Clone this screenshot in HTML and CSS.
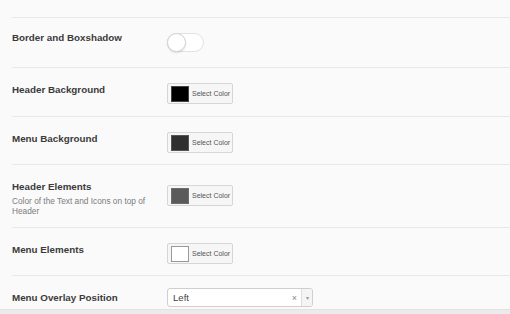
FILE: index.html
```html
<!DOCTYPE html>
<html>
<head>
<meta charset="utf-8">
<link rel="stylesheet" href="styles.css">
</head>
<body>
<div class="panel">
  <div class="spacer"></div>
  <div class="row row-toggle">
    <div class="label"><div class="title title-toggle">Border and Boxshadow</div></div>
    <div class="control">
      <div class="toggle"><span class="knob"></span></div>
    </div>
  </div>
  <div class="row row-tall">
    <div class="label"><div class="title">Header Background</div></div>
    <div class="control">
      <div class="color-btn"><span class="swatch sw-black"></span><span class="btn-text">Select Color</span></div>
    </div>
  </div>
  <div class="row">
    <div class="label"><div class="title">Menu Background</div></div>
    <div class="control">
      <div class="color-btn"><span class="swatch sw-dark"></span><span class="btn-text">Select Color</span></div>
    </div>
  </div>
  <div class="row">
    <div class="label">
      <div class="title">Header Elements</div>
      <div class="desc">Color of the Text and Icons on top of Header</div>
    </div>
    <div class="control">
      <div class="color-btn btn-mid"><span class="swatch sw-grey"></span><span class="btn-text">Select Color</span></div>
    </div>
  </div>
  <div class="row">
    <div class="label"><div class="title">Menu Elements</div></div>
    <div class="control">
      <div class="color-btn"><span class="swatch sw-white"></span><span class="btn-text">Select Color</span></div>
    </div>
  </div>
  <div class="row">
    <div class="label"><div class="title">Menu Overlay Position</div></div>
    <div class="control">
      <div class="select">
        <span class="select-value">Left</span>
        <span class="select-clear">×</span>
        <span class="select-arrow">▾</span>
      </div>
    </div>
  </div>
</div>
<div class="footer"></div>
</body>
</html>
```

FILE: styles.css
```css
html, body {
  margin: 0;
  padding: 0;
}
body {
  background: #ebebeb;
  font-family: "Liberation Sans", Arial, sans-serif;
  width: 510px;
  height: 314px;
  overflow: hidden;
}
.panel {
  background: #fafafa;
  height: 309px;
  overflow: hidden;
  padding-left: 12px;
}
.spacer {
  height: 17px;
}
.row {
  display: grid;
  grid-template-columns: 155px 1fr;
  border-top: 1px solid #e8e8e8;
  padding: 14px 0 11px;
}
.row-toggle {
  padding-bottom: 13px;
}
.row-tall {
  padding-bottom: 12px;
}
.label {
  width: 142px;
}
.title {
  font-size: 9.8px;
  font-weight: bold;
  color: #3a3a3a;
  line-height: 14px;
  margin-top: 1px;
}
.title-toggle {
  margin-top: -1px;
}
.desc {
  font-size: 8.3px;
  color: #7a7a7a;
  line-height: 10px;
  margin-top: 2px;
}
.control {
  height: 22px;
  display: flex;
  align-items: flex-start;
}
.toggle {
  margin-top: 1px;
  width: 35px;
  height: 17px;
  border: 1px solid #e2e2e2;
  border-radius: 10px;
  background: #fff;
  position: relative;
}
.knob {
  position: absolute;
  left: -1px;
  top: -1px;
  width: 17px;
  height: 17px;
  border-radius: 50%;
  background: #fff;
  border: 1px solid #d4d4d4;
  box-shadow: 0 1px 2px rgba(0, 0, 0, 0.12);
}
.color-btn {
  margin-top: 1px;
  box-sizing: border-box;
  width: 66px;
  height: 21px;
  border: 1px solid #d6d6d6;
  border-radius: 2px;
  background: #f6f6f6;
  display: flex;
  align-items: center;
  padding-left: 3px;
  gap: 3px;
}
.btn-mid {
  margin-top: 6px;
}
.swatch {
  box-sizing: border-box;
  width: 18px;
  height: 16px;
  border: 1px solid #777;
}
.sw-black { background: #000; border-color: #444; }
.sw-dark { background: #2f2f2f; border-color: #555; }
.sw-grey { background: #5a5a5a; border-color: #6c6c6c; }
.sw-white { background: #fff; border-color: #999; }
.btn-text {
  font-size: 7px;
  color: #555;
  white-space: nowrap;
}
.select {
  box-sizing: border-box;
  width: 146px;
  height: 19px;
  margin-top: -2px;
  border: 1px solid #cfcfcf;
  border-radius: 3px;
  background: #fff;
  display: flex;
  align-items: center;
}
.select-value {
  flex: 1;
  font-size: 9.6px;
  color: #444;
  padding-left: 5px;
}
.select-clear {
  font-size: 9px;
  color: #888;
  padding-right: 4px;
}
.select-arrow {
  height: 100%;
  width: 11px;
  box-sizing: border-box;
  border-left: 1px solid #ddd;
  background: #f4f4f4;
  border-radius: 0 3px 3px 0;
  font-size: 6px;
  color: #999;
  display: flex;
  align-items: center;
  justify-content: center;
}
.footer {
  height: 5px;
  background: #ebebeb;
  border-top: 1px solid #e2e2e2;
  box-sizing: border-box;
}
```
